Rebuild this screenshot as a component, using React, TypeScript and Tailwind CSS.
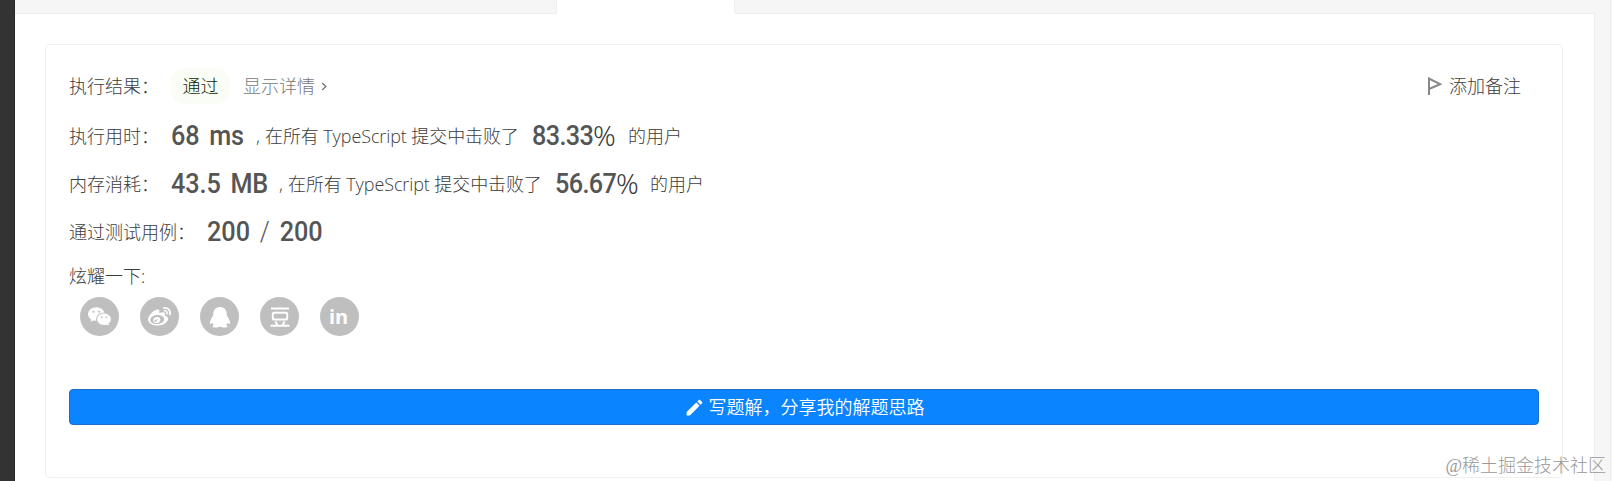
import React from "react";
import clsx from "clsx";
import { MdEdit } from "react-icons/md";
import { RiWechatFill, RiWeiboFill } from "react-icons/ri";

interface RankRowProps {
  label: string;
  value: string;
  percent: string;
  valueWidth: string;
  tailGap: string;
}

const numberFont =
  "font-[Roboto,'Liberation_Sans',sans-serif] font-medium text-[28px] text-[#555] whitespace-nowrap inline-block origin-left scale-x-90 [word-spacing:4px]";

const Label = ({ text }: { text: string }) => (
  <span className="w-[102px] shrink-0">{text}</span>
);

const RankRow = ({
  label,
  value,
  percent,
  valueWidth,
  tailGap,
}: RankRowProps) => (
  <div className="flex h-12 items-center">
    <Label text={label} />
    <span className={valueWidth}>
      <span className={clsx(numberFont, "tracking-[-0.1px]")}>{value}</span>
    </span>
    <span className="w-[9px]">,</span>
    <span className="w-[267px] tracking-[-0.1px]">
      在所有 TypeScript 提交中击败了
    </span>
    <span className="w-[61px]">
      <span className={clsx(numberFont, "tracking-[-0.7px]")}>{percent}</span>
    </span>
    <span className="w-6 pb-[3px] font-['Noto_Sans',sans-serif] text-[28px] leading-none">
      %
    </span>
    <span className={tailGap}>的用户</span>
  </div>
);

const QqIcon = () => (
  <svg viewBox="0 0 24 24" className="size-6" fill="currentColor">
    <path d="M12 2c-4 0-6.700 2.900-6.700 6.800 0 1-.1 1.700-.6 2.500-1.300 2.100-2.700 4.500-2.700 6.600 0 .9.300 1.300.7 1.200.6-.1 1.200-.8 1.700-1.600.3 1 .8 1.900 1.600 2.700-1 .4-1.600.8-1.600 1.300 0 .8 1.500 1.100 3.300 1.100 1.700 0 3.200-.4 4-1.100h.6c.8.700 2.300 1.100 4 1.100 1.800 0 3.300-.3 3.300-1.100 0-.5-.6-.9-1.600-1.300.8-.8 1.300-1.700 1.600-2.700.5.8 1.100 1.500 1.700 1.600.4.100.7-.3.7-1.200 0-2.100-1.400-4.500-2.700-6.600-.5-.8-.6-1.500-.6-2.500C18.700 4.900 16 2 12 2z" />
  </svg>
);

const DoubanIcon = () => (
  <svg
    viewBox="0 0 20 20"
    className="size-5"
    fill="none"
    stroke="currentColor"
    strokeWidth="2"
  >
    <path d="M1 1.500h18M.500 18.800h19M5.500 14.500l2 4M14.500 14.500l-2 4" />
    <rect x="2.800" y="5.800" width="14.400" height="6.800" rx="1.200" />
  </svg>
);

const socials = [
  { name: "wechat", icon: <RiWechatFill size={25} /> },
  { name: "weibo", icon: <RiWeiboFill size={25} /> },
  { name: "qq", icon: <QqIcon /> },
  { name: "douban", icon: <DoubanIcon /> },
  {
    name: "linkedin",
    icon: (
      <span className="-ml-[2px] font-['Open_Sans',sans-serif] text-[20px] leading-none font-bold">
        in
      </span>
    ),
  },
];

const App = () => {
  return (
    <div className="relative flex h-[481px] w-[1612px] overflow-hidden bg-[#f6f6f6] font-['Open_Sans','Noto_Sans_CJK_SC',sans-serif] text-[18px] font-light text-[#3c3c3c]">
      <div className="w-[15px] shrink-0 border-r border-[#282828] bg-[#333]" />
      <div className="flex w-[1580px] shrink-0 flex-col border-r border-[#eeeeee] bg-white">
        <div className="flex h-[14px] shrink-0">
          <div className="w-[542px] border-r border-b border-[#eeeeee] bg-[#f6f6f6]" />
          <div className="w-[177px]" />
          <div className="-mr-px flex-1 rounded-bl-sm border-b border-l border-[#eeeeee] bg-[#f6f6f6]" />
        </div>
        <div className="mt-[30px] ml-[30px] h-[434px] w-[1518px] shrink-0 rounded-[5px] border border-[#f0f0f0] pl-[23px]">
          <div className="mt-[17px] mb-[2px] flex h-12 items-center">
            <Label text="执行结果：" />
            <span className="flex h-9 w-[59px] items-center justify-center rounded-[14px] bg-[#fafdf5] text-[#0c1f02]">
              通过
            </span>
            <a className="ml-[13px] flex items-center text-[#777]">
              显示详情
              <svg
                viewBox="0 0 6 10"
                className="ml-[6px] h-[9px] w-[6px]"
                fill="none"
                stroke="currentColor"
                strokeWidth="1.5"
              >
                <path d="M1 1l4 4-4 4" />
              </svg>
            </a>
            <div className="mr-[41px] ml-auto flex items-center">
              <svg
                viewBox="0 0 14 18"
                className="mr-[7px] h-[18px] w-[14px] text-[#888]"
                fill="none"
                stroke="currentColor"
                strokeWidth="2"
              >
                <path d="M1 18V1.500L12 7.200 1 12" />
              </svg>
              添加备注
            </div>
          </div>
          <RankRow
            label="执行用时："
            value="68 ms"
            percent="83.33"
            valueWidth="w-[85px]"
            tailGap="ml-[11px]"
          />
          <RankRow
            label="内存消耗："
            value="43.5 MB"
            percent="56.67"
            valueWidth="w-[108px]"
            tailGap="ml-[10px]"
          />
          <div className="flex h-12 items-center">
            <span className="w-[138px]">通过测试用例：</span>
            <span className={numberFont}>
              200 <span className="font-light">/</span> 200
            </span>
          </div>
          <div className="flex h-[41px] items-center">炫耀一下:</div>
          <div className="ml-[11px] flex gap-[21px]">
            {socials.map((item) => (
              <div
                key={item.name}
                className="flex size-[39px] items-center justify-center rounded-full bg-[#bfbfbf] text-white"
              >
                {item.icon}
              </div>
            ))}
          </div>
          <button className="mt-[53px] flex h-9 w-[1470px] items-center justify-center rounded-[4px] border border-[#1b6fc8] bg-[#0a84ff] font-[350] text-white">
            <MdEdit size={21} className="mr-1" />
            写题解，分享我的解题思路
          </button>
        </div>
      </div>
      <div className="ml-auto w-[2px] border-l border-[#ececec] bg-[#f9f9f9]" />
      <div className="absolute right-[6px] bottom-[2px] font-['Liberation_Serif','Noto_Sans_CJK_SC',serif] leading-[26px] text-[#999]">
        @稀土掘金技术社区
      </div>
    </div>
  );
};

export default App;
